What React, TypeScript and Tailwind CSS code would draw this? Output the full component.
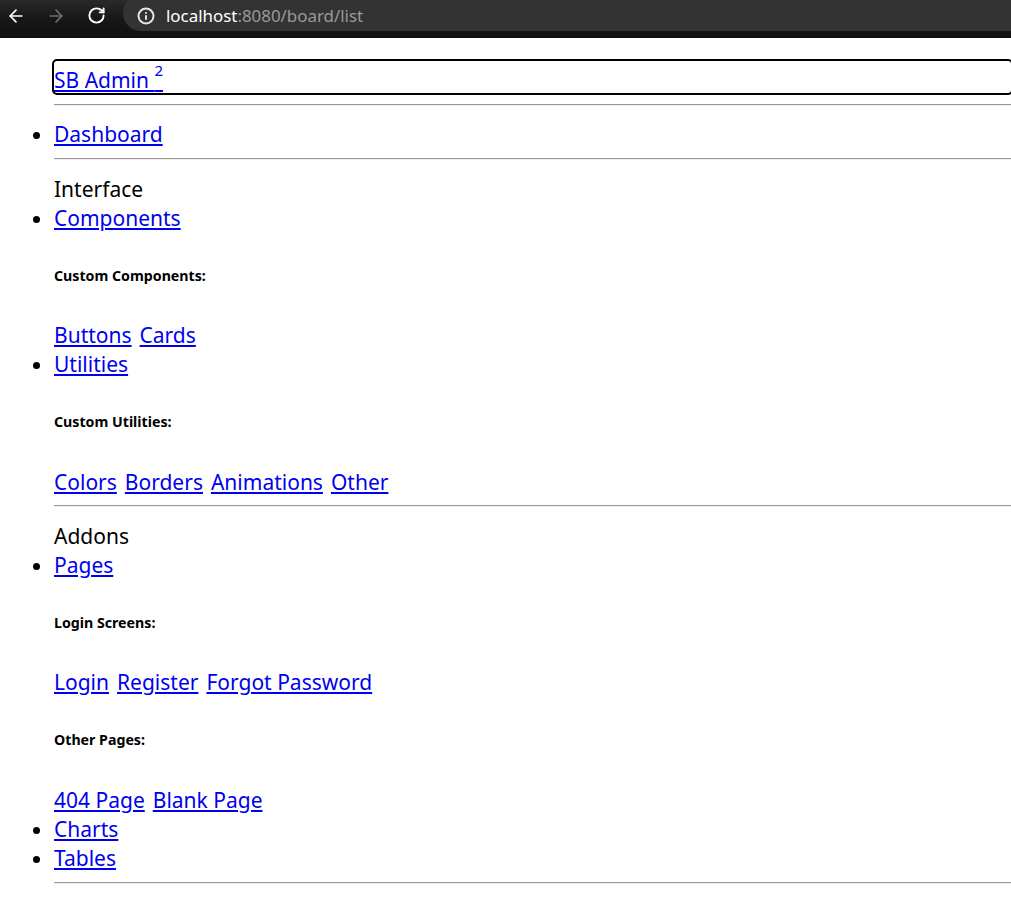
import React from "react";
import { ArrowLeft, ArrowRight, RotateCw, Info } from "lucide-react";

const font = { fontFamily: '"Noto Sans", "Noto Sans CJK KR", sans-serif' };

function Hr({ className }: { className: string }) {
  return <div className={`h-[2px] border-t border-t-[#9a9a9a] border-b border-b-[#eeeeee] ${className}`} />;
}

function L({ children }: { children: React.ReactNode }) {
  return <a href="#" className="text-[#0000ee] underline">{children}</a>;
}

function H6({ children }: { children: React.ReactNode }) {
  return <h6 className="mt-[34px] mb-[36.5px] h-[18px] leading-[18px] text-[14.2px] font-bold text-black">{children}</h6>;
}

export default function App() {
  return (
    <div className="w-[1011px] min-h-[910px] bg-white overflow-hidden" style={font}>
      <div className="h-[38px] flex bg-gradient-to-b from-[#2a2a2a] via-[#171717] to-[#111111]">
        <div className="w-[123px] h-[31px] flex items-center">
          <div className="w-[32px] flex justify-center ml-0"><ArrowLeft size={20} color="#ffffff" strokeWidth={2} /></div>
          <div className="w-[32px] flex justify-center ml-[8px]"><ArrowRight size={20} color="#6e6e6e" strokeWidth={2} /></div>
          <div className="w-[32px] flex justify-center ml-[8px]"><RotateCw size={19} color="#ffffff" strokeWidth={2.4} /></div>
        </div>
        <div className="flex-1 h-[36px] -mt-[5px] bg-[#333333] rounded-l-full flex items-center pt-[5px]">
          <div className="ml-[14px] w-[18px] flex justify-center"><Info size={18} color="#e8e8e8" strokeWidth={2.6} /></div>
          <div className="ml-[11px] text-[16.9px] leading-[20px]"><span className="text-white">localhost</span><span className="text-[#9a9a9a]">:8080/board/list</span></div>
        </div>
      </div>
      <ul className="list-disc pl-[54px] text-[21px] leading-[29px] text-black">
        <div className="mt-[23px] h-[32px] outline-2 outline-black rounded-[3px]">
          <a href="#" className="text-[#0000ee] underline block pt-[5px] leading-[29px]">
            SB Admin <sup className="text-[15px] top-[-12px]">2</sup>
          </a>
        </div>
        <Hr className="mt-[11px]" />
        <li className="mt-[14px]"><L>Dashboard</L></li>
        <Hr className="mt-[9px]" />
        <div className="mt-[14.5px]">Interface</div>
        <li>
          <L>Components</L>
          <H6>Custom Components:</H6>
          <div className="flex gap-[8px]"><L>Buttons</L><L>Cards</L></div>
        </li>
        <li>
          <L>Utilities</L>
          <H6>Custom Utilities:</H6>
          <div className="flex gap-[8px]"><L>Colors</L><L>Borders</L><L>Animations</L><L>Other</L></div>
        </li>
        <Hr className="mt-[8px]" />
        <div className="mt-[15px]">Addons</div>
        <li>
          <L>Pages</L>
          <H6>Login Screens:</H6>
          <div className="flex gap-[8px]"><L>Login</L><L>Register</L><L>Forgot Password</L></div>
          <H6>Other Pages:</H6>
          <div className="flex gap-[8px]"><L>404 Page</L><L>Blank Page</L></div>
        </li>
        <li><L>Charts</L></li>
        <li><L>Tables</L></li>
        <Hr className="mt-[9px]" />
      </ul>
    </div>
  );
}
